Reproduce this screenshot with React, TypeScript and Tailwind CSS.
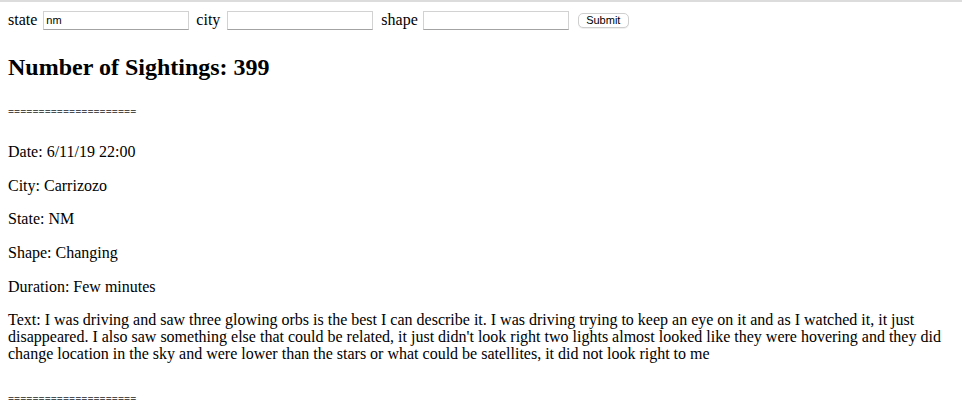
import React from 'react';

const separator = '=====================';

const sighting = {
  date: '6/11/19 22:00',
  city: 'Carrizozo',
  state: 'NM',
  shape: 'Changing',
  duration: 'Few minutes',
  text: "I was driving and saw three glowing orbs is the best I can describe it. I was driving trying to keep an eye on it and as I watched it, it just disappeared. I also saw something else that could be related, it just didn't look right two lights almost looked like they were hovering and they did change location in the sky and were lower than the stars or what could be satellites, it did not look right to me",
};

function Field({ value = '', className = '' }: { value?: string; className?: string }) {
  return (
    <input
      type="text"
      defaultValue={value}
      className={`h-[19px] w-[146px] border border-[#d2d2d2] border-b-[#a3a3a3] bg-white px-[2px] font-['Liberation_Sans',sans-serif] text-[11px] text-black outline-none ${className}`}
    />
  );
}

function Separator({ className = '' }: { className?: string }) {
  return <h6 className={`text-[10.72px] font-bold leading-[12px] text-[#222] ${className}`}>{separator}</h6>;
}

export default function App() {
  return (
    <div className="min-h-[409px] border-t-2 border-[#dcdcdc] bg-white px-2 pt-[6px] font-['Liberation_Serif',serif] text-[16px] text-black">
      <form className="flex h-[24px] items-center" onSubmit={(e) => e.preventDefault()}>
        <label>state</label>
        <Field value="nm" className="ml-[6px]" />
        <label className="ml-[7px]">city</label>
        <Field className="ml-[7px]" />
        <label className="ml-[8px]">shape</label>
        <Field className="ml-[5px]" />
        <button
          type="submit"
          className="ml-[9px] h-[15px] w-[51px] rounded-[5px] border border-[#cfcfcf] bg-white font-['Liberation_Sans',sans-serif] text-[11px] leading-[13px] text-black shadow-[0_1px_0_rgba(0,0,0,0.06)]"
        >
          Submit
        </button>
      </form>

      <h2 className="mt-[21px] text-[24px] font-bold leading-[28px]">Number of Sightings: 399</h2>

      <Separator className="mt-[24px]" />

      <div className="mt-[26px] leading-[17px]">
        <p>Date: {sighting.date}</p>
        <p className="mt-[17px]">City: {sighting.city}</p>
        <p className="mt-[16px]">State: {sighting.state}</p>
        <p className="mt-[17px]">Shape: {sighting.shape}</p>
        <p className="mt-[17px]">Duration: {sighting.duration}</p>
        <p className="mt-[16px]">Text: {sighting.text}</p>
      </div>

      <Separator className="mt-[30px]" />
    </div>
  );
}
